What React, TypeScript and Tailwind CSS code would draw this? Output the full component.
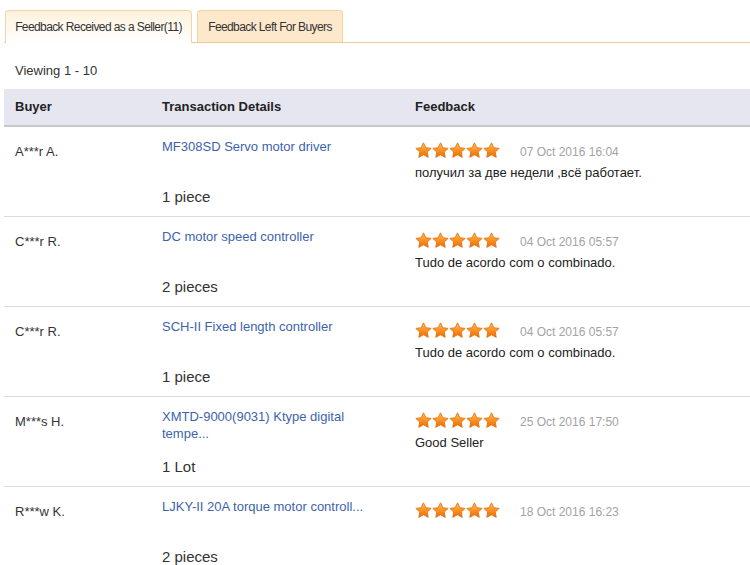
import { useId } from "react";

interface FeedbackRow {
  buyer: string;
  product: string;
  quantity: string;
  date: string;
  comment?: string;
}

const rows: FeedbackRow[] = [
  {
    buyer: "A***r A.",
    product: "MF308SD Servo motor driver",
    quantity: "1 piece",
    date: "07 Oct 2016 16:04",
    comment: "получил за две недели ,всё работает.",
  },
  {
    buyer: "C***r R.",
    product: "DC motor speed controller",
    quantity: "2 pieces",
    date: "04 Oct 2016 05:57",
    comment: "Tudo de acordo com o combinado.",
  },
  {
    buyer: "C***r R.",
    product: "SCH-II Fixed length controller",
    quantity: "1 piece",
    date: "04 Oct 2016 05:57",
    comment: "Tudo de acordo com o combinado.",
  },
  {
    buyer: "M***s H.",
    product: "XMTD-9000(9031) Ktype digital tempe...",
    quantity: "1 Lot",
    date: "25 Oct 2016 17:50",
    comment: "Good Seller",
  },
  {
    buyer: "R***w K.",
    product: "LJKY-II 20A torque motor controll...",
    quantity: "2 pieces",
    date: "18 Oct 2016 16:23",
  },
];

function Star() {
  const id = useId();
  return (
    <svg width="17" height="17" viewBox="0 0 24 24">
      <defs>
        <linearGradient id={id} x1="0" y1="0" x2="0" y2="1">
          <stop offset="0" stopColor="#ffc061" />
          <stop offset="0.55" stopColor="#fb8d1e" />
          <stop offset="1" stopColor="#ea6a06" />
        </linearGradient>
      </defs>
      <path
        d="M12 1.2l3.3 6.9 7.5.9-5.5 5.2 1.4 7.5L12 18l-6.7 3.7 1.4-7.5L1.2 9l7.5-.9z"
        fill={`url(#${id})`}
        stroke="#e0700c"
        strokeWidth="1.2"
        strokeLinejoin="round"
      />
    </svg>
  );
}

function Stars() {
  return (
    <div className="flex items-center">
      {[0, 1, 2, 3, 4].map((i) => (
        <Star key={i} />
      ))}
    </div>
  );
}

export default function App() {
  return (
    <div className="w-[750px] h-[565px] overflow-hidden bg-white pl-1 font-['Liberation_Sans',Arial,sans-serif] text-[#333]">
      {/* Tabs */}
      <div className="flex h-[43px] items-end border-b border-[#ebcd94] pt-[10px]">
        <div className="-mb-px ml-px flex h-[33px] w-[187px] items-center justify-center rounded-t-[4px] border border-b-0 border-[#f0d6a6] bg-gradient-to-b from-[#fdf1dc] to-white text-[12px] tracking-[-0.6px] text-[#333]">
          Feedback Received as a Seller(11)
        </div>
        <div className="ml-[5px] flex h-[32px] w-[146px] items-center justify-center rounded-t-[4px] border border-b-0 border-[#f1d3a0] bg-[#fde8cb] text-[12px] tracking-[-0.6px] text-[#333]">
          Feedback Left For Buyers
        </div>
      </div>

      <div className="h-[46px] pl-[11px] pt-[20px] text-[13px] leading-[15px]">Viewing 1 - 10</div>

      {/* Table header */}
      <div className="flex h-[38px] items-center border-b-2 border-[#c8c8cc] bg-[#e5e6f0] text-[13px] font-bold text-[#222]">
        <div className="w-[158px] pl-[11px]">Buyer</div>
        <div className="w-[253px]">Transaction Details</div>
        <div>Feedback</div>
      </div>

      {/* Rows */}
      {rows.map((row, i) => (
        <div key={i} className="flex h-[90px] border-b border-[#dcdcdc]">
          <div className="w-[158px] pl-[11px] pt-[17px] text-[13px] leading-[16px]">{row.buyer}</div>
          <div className="w-[253px] pt-[11px]">
            <div className="h-[34px] w-[212px] text-[13px] leading-[17px] text-[#3d63ad]">{row.product}</div>
            <div className="mt-[15px] text-[15px] leading-[20px] text-[#333]">{row.quantity}</div>
          </div>
          <div className="pt-[14px]">
            <div className="flex h-[18px] items-center">
              <Stars />
              <span className="ml-[20px] mt-[3px] text-[12px] text-[#a3a3a3]">{row.date}</span>
            </div>
            {row.comment && (
              <div className="mt-[6px] text-[13px] leading-[16px] text-[#222]">{row.comment}</div>
            )}
          </div>
        </div>
      ))}
    </div>
  );
}
